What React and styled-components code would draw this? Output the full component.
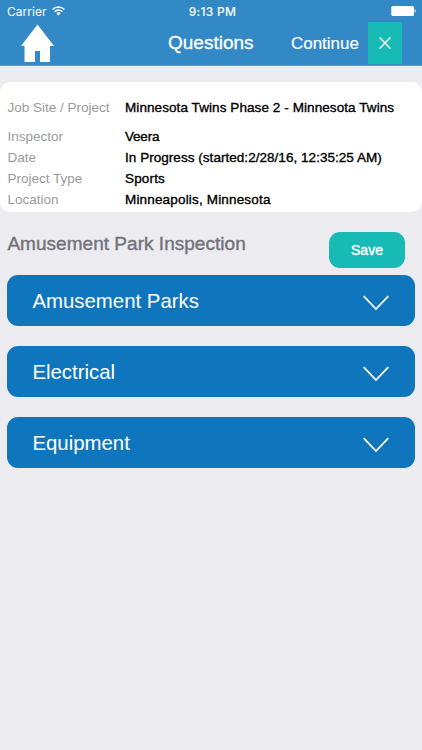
import React from 'react';
import styled, { createGlobalStyle } from 'styled-components';

const GlobalStyle = createGlobalStyle`
  * {
    box-sizing: border-box;
  }

  body {
    margin: 0;
    background: #ecebf0;
    font-family: "Liberation Sans", Arial, sans-serif;
  }
`;

const Screen = styled.div`
  width: 422px;
  height: 750px;
  overflow: hidden;
  background: #ecebf0;
`;

const Header = styled.header`
  height: 66px;
  background: #3388c6;
  border-bottom: 1px solid #5c9fd0;
  color: #fff;
`;

const StatusBar = styled.div`
  display: grid;
  grid-template-columns: 1fr auto 1fr;
  align-items: center;
  height: 22px;
  padding: 0 6px 0 7px;
  font-family: Inter, sans-serif;
  font-size: 12px;
`;

const Carrier = styled.div`
  display: flex;
  align-items: center;
  gap: 5px;
  letter-spacing: 0.05px;
`;

const Clock = styled.div`
  padding-left: 2px;
  font-weight: 500;
  letter-spacing: 0.3px;
`;

const BatteryIcon = styled.svg`
  justify-self: end;
`;

const NavBar = styled.nav`
  display: grid;
  grid-template-columns: 168px 1fr auto;
  height: 43px;
  padding-right: 20px;
`;

const HomeButton = styled.a`
  padding: 2px 0 0 20px;
`;

const NavTitle = styled.h1`
  margin: 0;
  font-size: 19px;
  font-weight: 400;
  line-height: 42px;
  -webkit-text-stroke: 0.3px currentColor;
`;

const NavActions = styled.div`
  display: flex;
`;

const ContinueButton = styled.button`
  height: 43px;
  padding: 1px 0 0;
  margin-right: 9px;
  border: 0;
  background: none;
  color: #fff;
  font-family: inherit;
  font-size: 17px;
  line-height: 42px;
  -webkit-text-stroke: 0.15px currentColor;
`;

const CloseButton = styled.button`
  display: flex;
  align-items: center;
  justify-content: center;
  width: 34px;
  height: 42px;
  padding: 0;
  border: 0;
  background: #17bab5;
`;

const DetailsCard = styled.dl`
  display: flex;
  flex-direction: column;
  height: 130px;
  margin: 16px 0 0;
  padding: 15px 7px 0;
  border-radius: 10px;
  background: #fff;
`;

const DetailRow = styled.div`
  display: grid;
  grid-template-columns: 118px 1fr;
  height: 21px;
  margin-bottom: ${props => (props.$spaced ? '8px' : 0)};
  font-size: 13.5px;
  line-height: 21px;
  white-space: nowrap;
`;

const Label = styled.dt`
  padding-left: 0.4px;
  color: #9a9a9c;
`;

const Value = styled.dd`
  margin: 0;
  color: #000;
  letter-spacing: ${props => props.$spacing || '0.06px'};
  -webkit-text-stroke: 0.35px currentColor;
`;

const SectionHeader = styled.div`
  display: flex;
  justify-content: space-between;
  height: 42px;
  margin-top: 20px;
  padding: 0 17px 0 7.4px;
`;

const SectionTitle = styled.h2`
  margin: 0;
  color: #727279;
  font-size: 19px;
  font-weight: 400;
  line-height: 24px;
  letter-spacing: 0.03px;
  -webkit-text-stroke: 0.4px currentColor;
`;

const SaveButton = styled.button`
  width: 76px;
  height: 36px;
  padding: 0;
  border: 0;
  border-radius: 11px;
  background: #17bab5;
  color: #fff;
  font-family: inherit;
  font-size: 14px;
  -webkit-text-stroke: 0.4px currentColor;
`;

const CategoryList = styled.div`
  display: flex;
  flex-direction: column;
  gap: 20.3px;
  padding: 0.5px 7.5px 0 7.4px;
`;

const Category = styled.button`
  display: flex;
  align-items: center;
  justify-content: space-between;
  height: 51px;
  padding: 2px 25.5px 0 25px;
  border: 0;
  border-radius: 11px;
  background: #0f75bd;
  color: #fff;
  font-family: inherit;
  font-size: 20.4px;
`;

const Chevron = styled.svg`
  margin-top: 3px;
`;

const details = [
  { label: 'Job Site / Project', value: 'Minnesota Twins Phase 2 - Minnesota Twins', spaced: true, spacing: '0.08px' },
  { label: 'Inspector', value: 'Veera', spacing: '-0.2px' },
  { label: 'Date', value: 'In Progress (started:2/28/16, 12:35:25 AM)', spacing: '0.04px' },
  { label: 'Project Type', value: 'Sports', spacing: '0.16px' },
  { label: 'Location', value: 'Minneapolis, Minnesota', spacing: '0.17px' },
];

const categories = ['Amusement Parks', 'Electrical', 'Equipment'];

function WifiIcon() {
  return (
    <svg width="13" height="10" viewBox="0 0 13 10" fill="none" stroke="#fff" strokeWidth="1.6">
      <path d="M.6 3.5a8.3 8.3 0 0 1 11.8 0M2.7 5.7a5.3 5.3 0 0 1 7.6 0" />
      <path d="M4.4 7.3a3 3 0 0 1 4.2 0L6.5 9.4z" fill="#fff" stroke="none" />
    </svg>
  );
}

function App() {
  return (
    <Screen>
      <GlobalStyle />
      <Header>
        <StatusBar>
          <Carrier>
            Carrier
            <WifiIcon />
          </Carrier>
          <Clock>9:13 PM</Clock>
          <BatteryIcon width="25" height="10" viewBox="0 0 25 10" fill="#fff">
            <rect x=".3" width="22.7" height="10" rx="1.5" />
            <path d="M23.7 3.3c1.3.2 1.3 3.2 0 3.4z" />
          </BatteryIcon>
        </StatusBar>
        <NavBar>
          <HomeButton aria-label="Home">
            <svg width="35" height="39" viewBox="0 0 35 39" fill="#fff">
              <path d="M17.5.5 34 22h-4v16H20V27h-5v11H4.5V22H1z" />
            </svg>
          </HomeButton>
          <NavTitle>Questions</NavTitle>
          <NavActions>
            <ContinueButton>Continue</ContinueButton>
            <CloseButton aria-label="Close">
              <svg width="12" height="12" viewBox="0 0 12 12" stroke="#fff" strokeWidth="1.4">
                <path d="M.6.6l10.8 10.8M11.4.6L.6 11.4" />
              </svg>
            </CloseButton>
          </NavActions>
        </NavBar>
      </Header>

      <DetailsCard>
        {details.map(item => (
          <DetailRow key={item.label} $spaced={item.spaced}>
            <Label>{item.label}</Label>
            <Value $spacing={item.spacing}>{item.value}</Value>
          </DetailRow>
        ))}
      </DetailsCard>

      <SectionHeader>
        <SectionTitle>Amusement Park Inspection</SectionTitle>
        <SaveButton>Save</SaveButton>
      </SectionHeader>

      <CategoryList>
        {categories.map(name => (
          <Category key={name}>
            <span>{name}</span>
            <Chevron width="26" height="16" viewBox="0 0 26 16" fill="none" stroke="#fff" strokeWidth="1.8">
              <path d="M.7 1.2 13 14 25.3 1.2" />
            </Chevron>
          </Category>
        ))}
      </CategoryList>
    </Screen>
  );
}

export default App;
